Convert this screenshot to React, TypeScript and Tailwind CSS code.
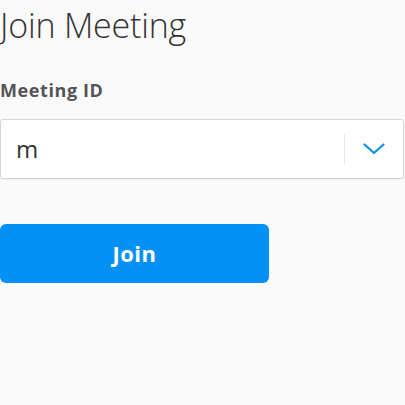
import React from "react";

export default function App() {
  return (
    <div className="w-[405px] h-[405px] bg-[#fafafa] overflow-hidden" style={{ fontFamily: '"Open Sans", "Noto Sans", sans-serif' }}>
      <h1 className="text-[34px] leading-none font-light text-[#333] pt-[8px] tracking-[-0.2px]">Join Meeting</h1>
      <div className="mt-[39px] text-[18px] leading-none font-bold text-[#555] tracking-[0.6px]">Meeting ID</div>
      <div className="mt-[20px] w-[404px] h-[60px] bg-white border border-[#d6d6d6] rounded-[3px] flex items-center shadow-[0_1px_1px_rgba(0,0,0,0.05)]">
        <span className="flex-1 pl-[15px] text-[24px] text-[#333] leading-none">m</span>
        <div className="w-px h-[30px] bg-[#e3e6ea]" />
        <div className="w-[58px] flex items-center justify-center">
          <svg width="22" height="12" viewBox="0 0 22 12" fill="none">
            <path d="M1.5 1.5 L11 10 L20.5 1.5" stroke="#0e8ee9" strokeWidth="2.2" strokeLinecap="round" strokeLinejoin="round" />
          </svg>
        </div>
      </div>
      <button className="mt-[45px] w-[269px] h-[59px] bg-[#0590f5] rounded-[6px] text-white text-[22px] font-bold flex items-center justify-center tracking-[0.5px]">
        Join
      </button>
    </div>
  );
}
